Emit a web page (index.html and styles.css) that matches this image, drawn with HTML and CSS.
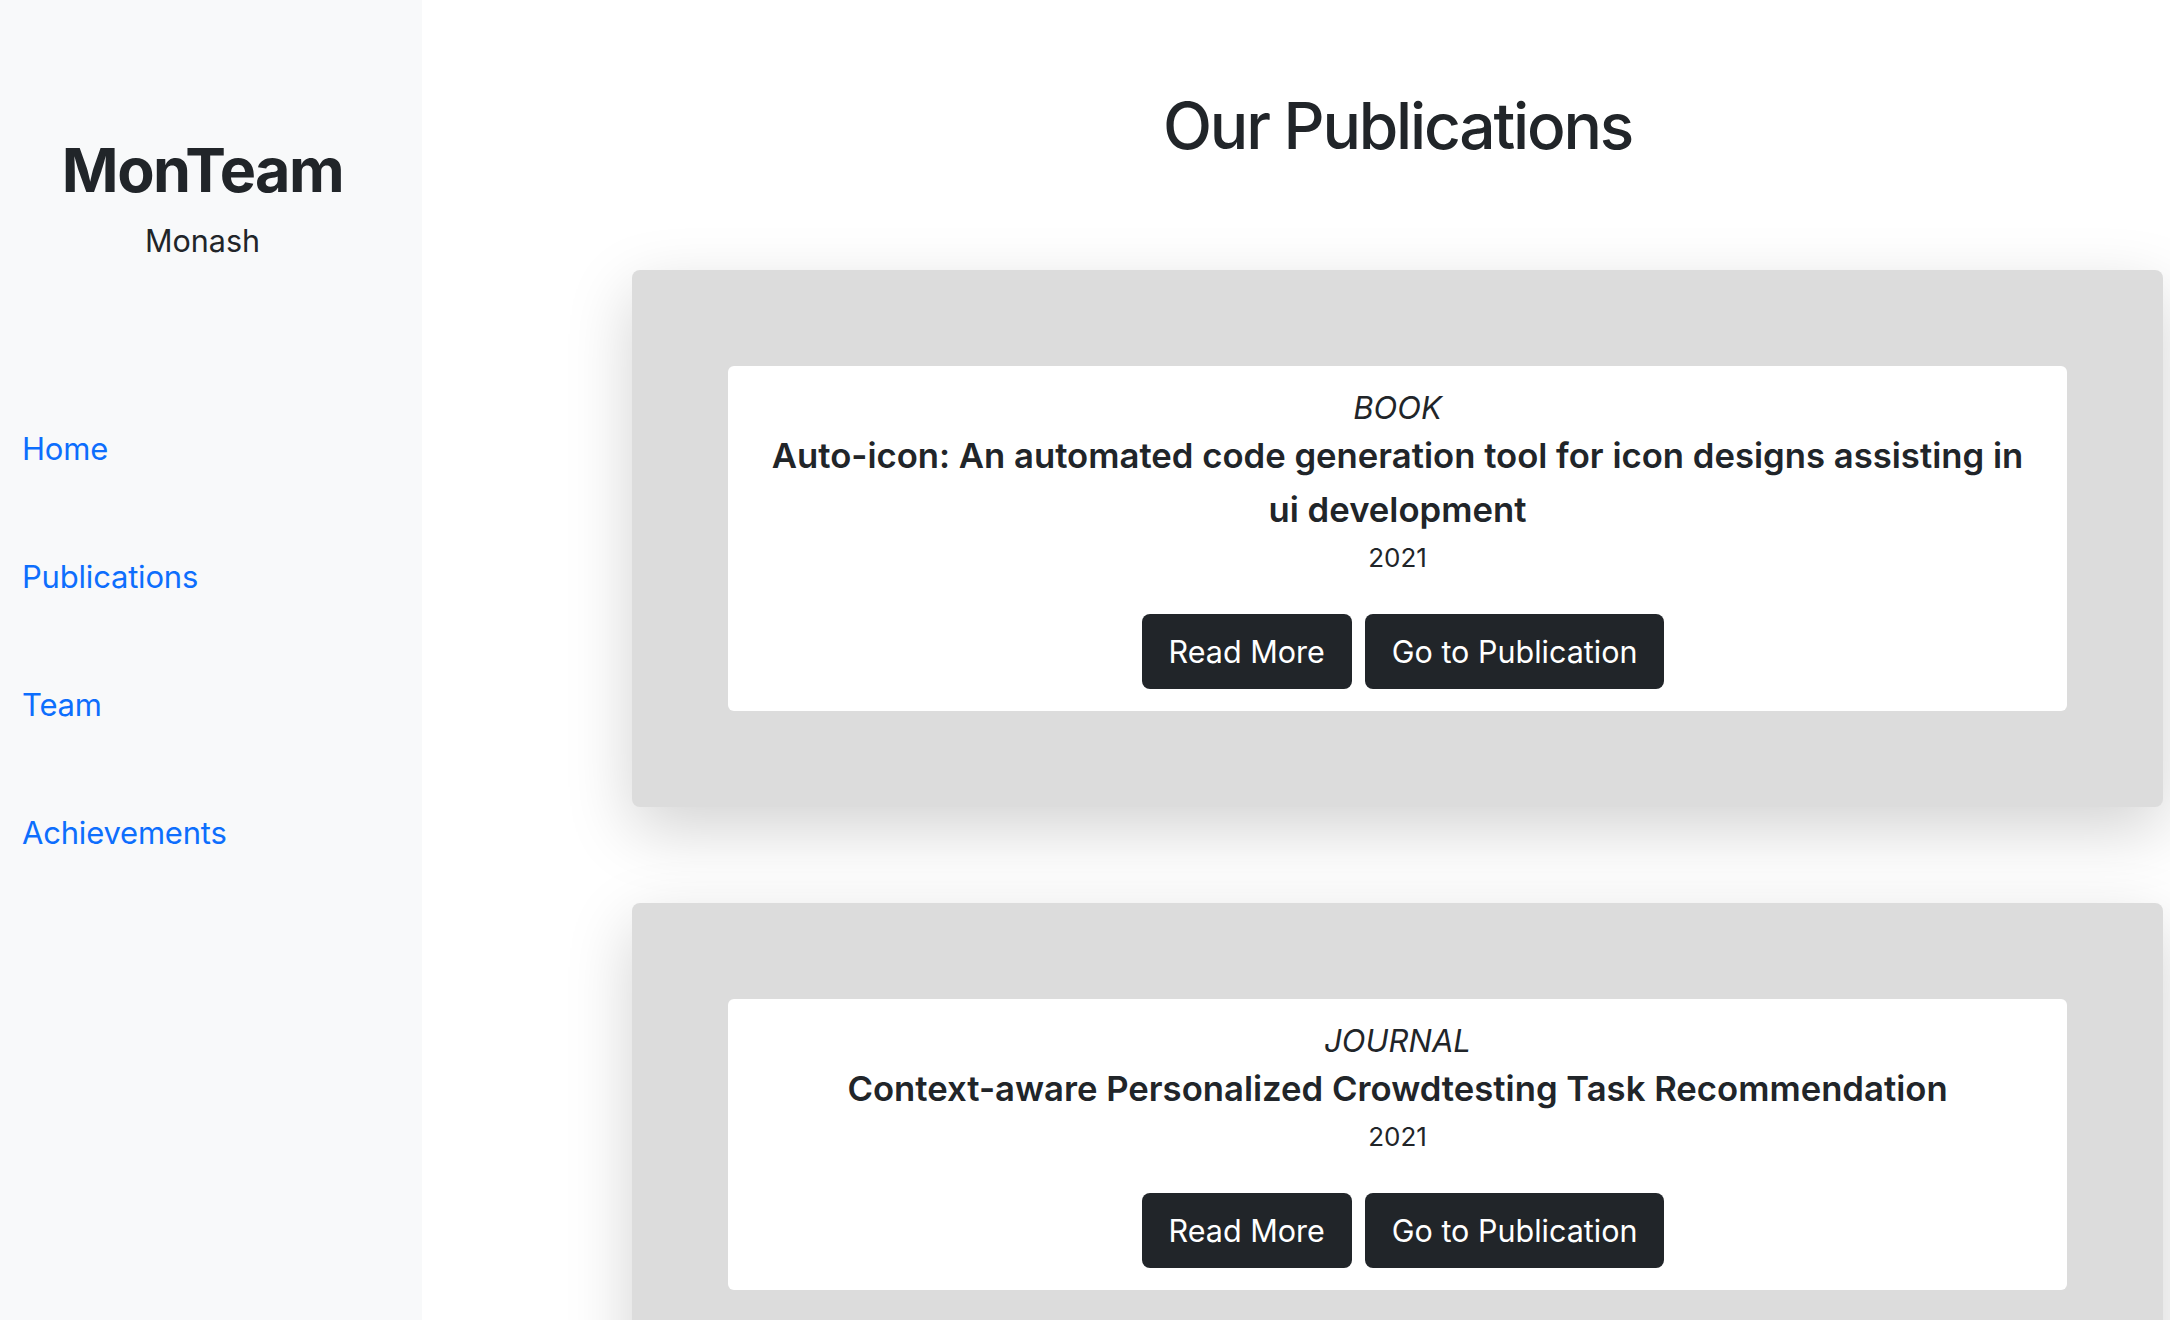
FILE: index.html
```html
<!DOCTYPE html>
<html lang="en">
<head>
<meta charset="utf-8">
<title>MonTeam - Publications</title>
<link rel="stylesheet" href="styles.css">
</head>
<body>
<div class="layout">
  <aside class="sidebar">
    <div class="brand">
      <div class="brand-name">MonTeam</div>
      <div class="brand-sub">Monash</div>
    </div>
    <nav class="nav">
      <a class="nav-link" href="#">Home</a>
      <a class="nav-link" href="#">Publications</a>
      <a class="nav-link" href="#">Team</a>
      <a class="nav-link" href="#">Achievements</a>
    </nav>
  </aside>
  <main class="main">
    <h1 class="page-title">Our Publications</h1>
    <div class="pub-list">
      <section class="pub-card">
        <div class="pub-body">
          <div class="pub-type">BOOK</div>
          <h2 class="pub-title">Auto-icon: An automated code generation tool for icon designs assisting in ui development</h2>
          <div class="pub-year">2021</div>
          <div class="pub-actions">
            <a class="btn" href="#">Read More</a>
            <a class="btn" href="#">Go to Publication</a>
          </div>
        </div>
      </section>
      <section class="pub-card">
        <div class="pub-body">
          <div class="pub-type">JOURNAL</div>
          <h2 class="pub-title">Context-aware Personalized Crowdtesting Task Recommendation</h2>
          <div class="pub-year">2021</div>
          <div class="pub-actions">
            <a class="btn" href="#">Read More</a>
            <a class="btn" href="#">Go to Publication</a>
          </div>
        </div>
      </section>
    </div>
  </main>
</div>
</body>
</html>
```
FILE: styles.css
```css
* { box-sizing: border-box; }
html, body {
  margin: 0;
  padding: 0;
}
body {
  font-family: Inter, "Noto Sans", "Liberation Sans", sans-serif;
  color: #212529;
  background: #ffffff;
}
.layout {
  display: flex;
  min-height: 100vh;
}
.sidebar {
  width: 422px;
  flex: 0 0 422px;
  background: #f8f9fa;
  padding-top: 133px;
}
.brand {
  width: 405px;
  text-align: center;
}
.brand-name {
  font-size: 61px;
  font-weight: 700;
  line-height: 74px;
  letter-spacing: -1.5px;
}
.brand-sub {
  margin-top: 14px;
  font-size: 30.5px;
  line-height: 40px;
}
.nav {
  display: flex;
  flex-direction: column;
  gap: 78px;
  margin-top: 163px;
  padding-left: 22px;
}
.nav-link {
  font-size: 31px;
  line-height: 50px;
  letter-spacing: -0.2px;
  color: #0d6efd;
  text-decoration: none;
}
.main {
  flex: 1;
  padding: 83px 7px 0 210px;
}
.page-title {
  margin: 0 0 101px;
  text-align: center;
  font-size: 64px;
  font-weight: 500;
  line-height: 86px;
  letter-spacing: -2.2px;
}
.pub-list {
  display: flex;
  flex-direction: column;
  gap: 96px;
}
.pub-card {
  background: #dcdcdc;
  border-radius: 8px;
  padding: 96px;
  box-shadow: 0 22px 66px rgba(0, 0, 0, 0.175);
}
.pub-body {
  background: #ffffff;
  border-radius: 6px;
  padding: 22px 30px 22px;
  text-align: center;
}
.pub-type {
  font-style: italic;
  font-size: 31px;
  line-height: 40px;
}
.pub-title {
  margin: 0;
  font-size: 34.7px;
  font-weight: 600;
  line-height: 54px;
}
.pub-year {
  font-size: 26px;
  line-height: 43px;
}
.pub-actions {
  margin-top: 35px;
  padding-left: 11px;
  display: flex;
  justify-content: center;
  gap: 13px;
}
.btn {
  display: inline-flex;
  align-items: center;
  height: 75px;
  padding: 0 27px;
  background: #212529;
  color: #ffffff;
  border-radius: 8px;
  font-size: 30.5px;
  text-decoration: none;
}
```
